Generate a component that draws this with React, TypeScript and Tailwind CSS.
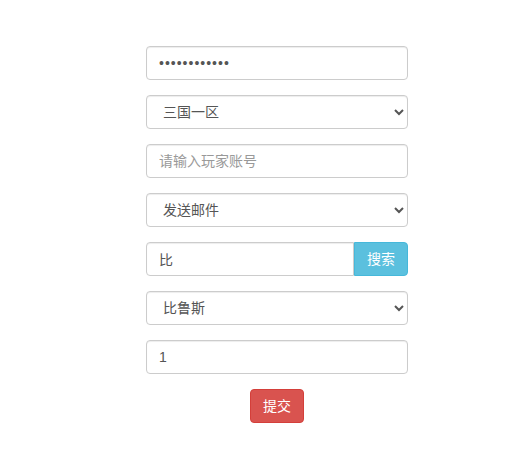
import * as React from "react";

const field =
  "block w-full h-[34px] px-3 text-[14px] text-[#555] bg-white border border-[#ccc] rounded-[4px] shadow-[inset_0_1px_1px_rgba(0,0,0,0.075)] outline-none placeholder:text-[#999]";

export default function App() {
  const [pwd, setPwd] = React.useState("abcdefghijkl");
  const [server, setServer] = React.useState("三国一区");
  const [account, setAccount] = React.useState("");
  const [action, setAction] = React.useState("发送邮件");
  const [keyword, setKeyword] = React.useState("比");
  const [item, setItem] = React.useState("比鲁斯");
  const [count, setCount] = React.useState("1");

  return (
    <div
      className="min-h-[470px] bg-white pt-[46px]"
      style={{ fontFamily: '"Liberation Sans", "Noto Sans CJK SC", sans-serif' }}
    >
      <form className="ml-[146px] w-[262px] flex flex-col gap-[15px]">
        <input
          type="password"
          value={pwd}
          onChange={(e) => setPwd(e.target.value)}
          className={field + " tracking-[1px]"}
        />

        <select
          value={server}
          onChange={(e) => setServer(e.target.value)}
          className={field}
        >
          <option>三国一区</option>
          <option>三国二区</option>
        </select>

        <input
          type="text"
          value={account}
          onChange={(e) => setAccount(e.target.value)}
          placeholder="请输入玩家账号"
          className={field}
        />

        <select
          value={action}
          onChange={(e) => setAction(e.target.value)}
          className={field}
        >
          <option>发送邮件</option>
          <option>发送道具</option>
        </select>

        {/* search group */}
        <div className="flex">
          <input
            type="text"
            value={keyword}
            onChange={(e) => setKeyword(e.target.value)}
            className={field + " rounded-r-none"}
          />
          <button
            type="button"
            className="shrink-0 w-[54px] h-[34px] text-[14px] text-white bg-[#5bc0de] border border-[#46b8da] rounded-r-[4px]"
          >
            搜索
          </button>
        </div>

        <select
          value={item}
          onChange={(e) => setItem(e.target.value)}
          className={field}
        >
          <option>比鲁斯</option>
          <option>比克</option>
        </select>

        <input
          type="text"
          value={count}
          onChange={(e) => setCount(e.target.value)}
          className={field}
        />

        <div className="flex justify-center">
          <button
            type="button"
            className="w-[54px] h-[34px] text-[14px] text-white bg-[#d9534f] border border-[#d43f3a] rounded-[4px]"
          >
            提交
          </button>
        </div>
      </form>
    </div>
  );
}
